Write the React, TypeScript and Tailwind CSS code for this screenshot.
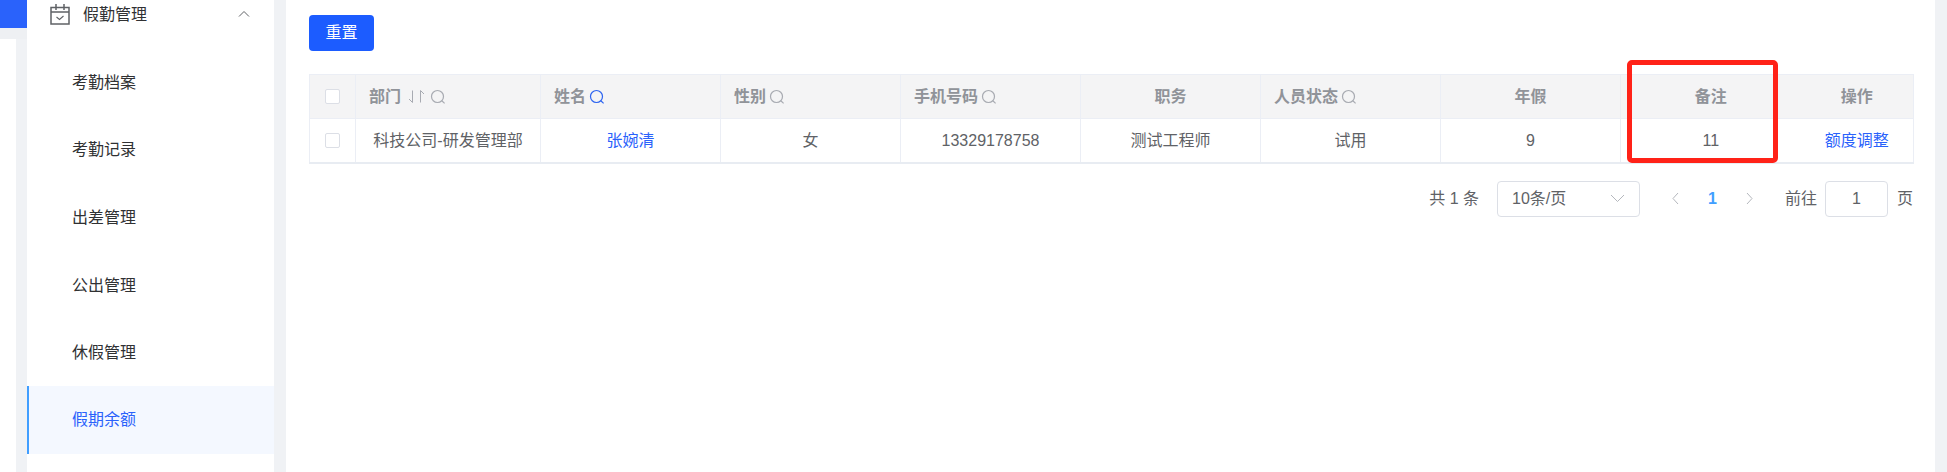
import React from "react";

const Search = ({ blue = false }: { blue?: boolean }) => (
  <svg width="16" height="16" viewBox="0 0 16 16" fill="none" className="inline-block shrink-0" stroke={blue ? "#2d64f0" : "#a8abb2"} strokeWidth="1.2">
    <circle cx="7.5" cy="7.5" r="6" />
    <path d="M11.8 11.8l2.8 2.6" />
  </svg>
);

const Sort = () => (
  <svg width="21" height="15" viewBox="0 0 21 15" fill="none" stroke="#a8abb2" strokeWidth="1" className="inline-block shrink-0 ml-[2px]">
    <path d="M6.5 1.5v12L3 10" />
    <path d="M14.5 13.5v-12L18 5" />
  </svg>
);

const Calendar = () => (
  <svg width="20" height="21" viewBox="0 0 20 21" fill="none" stroke="#5f6266" strokeWidth="1.5">
    <rect x="1" y="3.5" width="18" height="16.5" />
    <path d="M1 8h18M6 0v6M14 0v6" />
    <path d="M6.5 13l3 2.5 4-3.5" strokeWidth="1.1" />
  </svg>
);

const Chevron = ({ d, w = 12, h = 8, c = "#606266" }: { d: string; w?: number; h?: number; c?: string }) => (
  <svg width={w} height={h} viewBox={`0 0 ${w} ${h}`} fill="none" stroke={c} strokeWidth="1">
    <path d={d} />
  </svg>
);

const menu = ["考勤档案", "考勤记录", "出差管理", "公出管理", "休假管理"];

const heads: { t: string; left?: boolean; icons?: React.ReactNode }[] = [
  { t: "部门", left: true, icons: <><Sort /><Search /></> },
  { t: "姓名", left: true, icons: <Search blue /> },
  { t: "性别", left: true, icons: <Search /> },
  { t: "手机号码", left: true, icons: <Search /> },
  { t: "职务" },
  { t: "人员状态", left: true, icons: <Search /> },
  { t: "年假" },
];

const Check = () => <span className="block w-[15px] h-[15px] mx-auto bg-white border border-[#dcdfe6] rounded-[2px]" />;

export default function App() {
  return (
    <div
      className="flex w-full h-[472px] overflow-hidden bg-[#f0f2f5] text-[16px]"
      style={{ fontFamily: '"Liberation Sans","Noto Sans CJK SC",sans-serif' }}
    >
      <div className="w-[27px] shrink-0 flex flex-col">
        <div className="h-[28px] bg-[#2a62fb] shrink-0" />
        <div className="h-[11px] shrink-0 bg-[#eef0f3]" />
        <div className="w-[16px] flex-1 bg-white" />
      </div>

      <aside className="w-[247px] shrink-0 bg-white text-[#303133]">
        <div className="-mt-[20px] h-[68px] flex items-center pl-[23px] pr-[24px]">
          <Calendar />
          <span className="ml-[13px] flex-1 pt-[1px]">假勤管理</span>
          <Chevron d="M1 6.5l5-5 5 5" />
        </div>
        {menu.map((m) => (
          <div key={m} className="h-[67.6px] flex items-center pl-[45px] pt-[2px]">{m}</div>
        ))}
        <div className="h-[68px] flex items-center pl-[43px] border-l-2 border-[#409eff] bg-[#f4f8ff] text-[#2a62fb]">假期余额</div>
      </aside>

      <main className="relative ml-[12px] w-[1649px] shrink-0 bg-white pl-[23px] pr-[22px] pt-[15px] text-[#606266]">
        <button className="block w-[65px] h-[36px] rounded-[4px] bg-[#1c5cff] text-white">重置</button>

        <table className="mt-[23px] w-[1604px] table-fixed border-collapse border-b-[2px] border-[#e8ecf2]">
          <colgroup>
            <col className="w-[46px]" />
            <col className="w-[185px]" />
            <col className="w-[180px]" />
            <col className="w-[180px]" />
            <col className="w-[180px]" />
            <col className="w-[180px]" />
            <col className="w-[180px]" />
            <col className="w-[180px]" />
            <col className="w-[180px]" />
            <col className="w-[113px]" />
          </colgroup>
          <thead>
            <tr className="h-[44px] bg-[#f4f4f5] text-[#909399]">
              <th className="border border-[#ebeef5] p-0"><Check /></th>
              {heads.map((h) => (
                <th key={h.t} className={`border border-[#ebeef5] p-0 font-bold ${h.left ? "text-left pl-[14px]" : "text-center"}`}>
                  <span className={`flex items-center gap-[3px] ${h.left ? "-ml-[1px]" : "justify-center"}`}>
                    <span>{h.t}</span>
                    {h.icons}
                  </span>
                </th>
              ))}
              <th className="border-y border-l border-[#ebeef5] p-0 font-bold text-center">备注</th>
              <th className="border-y border-r border-[#ebeef5] p-0 font-bold text-center">操作</th>
            </tr>
          </thead>
          <tbody>
            <tr className="h-[44px] text-center">
              <td className="border-x border-[#ebeef5] p-0"><Check /></td>
              <td className="border-x border-[#ebeef5] p-0 pt-[1px]">科技公司-研发管理部</td>
              <td className="border-x border-[#ebeef5] p-0 pt-[1px] text-[#2a62fb]">张婉清</td>
              <td className="border-x border-[#ebeef5] p-0 pt-[1px]">女</td>
              <td className="border-x border-[#ebeef5] p-0 pt-[1px]">13329178758</td>
              <td className="border-x border-[#ebeef5] p-0 pt-[1px]">测试工程师</td>
              <td className="border-x border-[#ebeef5] p-0 pt-[1px]">试用</td>
              <td className="border-x border-[#ebeef5] p-0 pt-[1px]">9</td>
              <td className="border-l border-[#ebeef5] p-0 pt-[1px]">11</td>
              <td className="border-r border-[#ebeef5] p-0 pt-[1px] text-[#2a62fb]">额度调整</td>
            </tr>
          </tbody>
        </table>

        <div className="mt-[17px] h-[36px] w-[1604px] flex items-center justify-end text-[#606266]">
          <span>共 1 条</span>
          <div className="ml-[18px] w-[143px] h-[36px] border border-[#dcdfe6] rounded-[4px] flex items-center justify-between pl-[14px] pr-[14px]">
            <span>10条/页</span>
            <Chevron d="M1 1l6.5 6.5L14 1" w={15} h={9} c="#b4b7bd" />
          </div>
          <span className="ml-[32px]"><Chevron d="M6 1L1 6.5 6 12" w={7} h={13} c="#b4b7bd" /></span>
          <span className="ml-[29px] font-bold text-[#409eff]">1</span>
          <span className="ml-[29px]"><Chevron d="M1 1l5 5.5L1 12" w={7} h={13} c="#b4b7bd" /></span>
          <span className="ml-[32px]">前往</span>
          <div className="ml-[8px] w-[63px] h-[36px] border border-[#dcdfe6] rounded-[4px] flex items-center justify-center">1</div>
          <span className="ml-[9px]">页</span>
        </div>

        <div className="absolute left-[1341px] top-[60px] w-[151px] h-[103px] border-[5px] border-[#ff2218] rounded-[5px]" />
      </main>

      <div className="flex-1 bg-[#f0f2f5]" />
    </div>
  );
}
